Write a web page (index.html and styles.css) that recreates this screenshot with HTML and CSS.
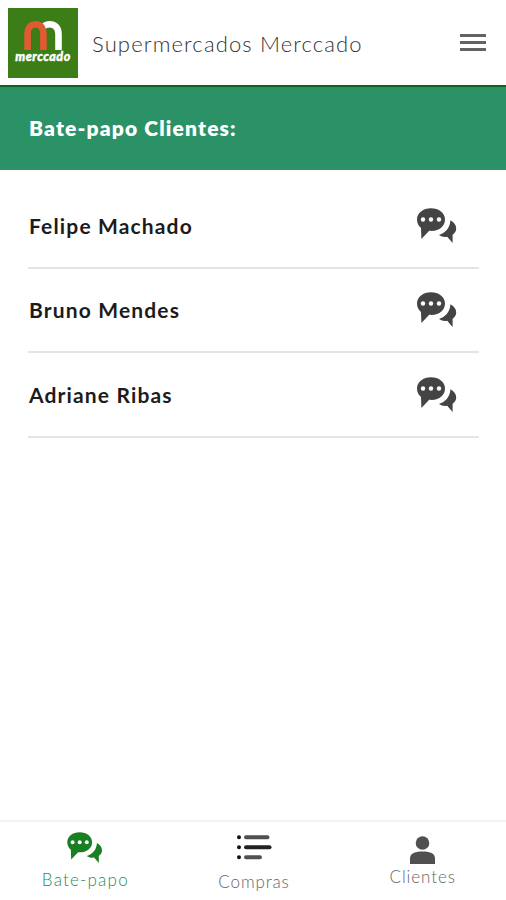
FILE: index.html
```html
<!DOCTYPE html>
<html lang="pt-BR">
<head>
    <meta charset="UTF-8">
    <meta name="viewport" content="width=device-width, initial-scale=1.0">
    <title>Supermercados Merccado</title>
    <link rel="stylesheet" href="styles.css">
</head>
<body>
    <svg class="symbols" aria-hidden="true">
        <symbol id="chat" viewBox="0 0 40 35">
            <path d="M14 .3C6.200.3 0 5 0 11.500c0 3.500 1.500 6.500 4 8.500l.4 11 7.800-8.200c9.800 1 15.800-4.600 15.800-11.300C28 5 21.800.3 14 .3z"/>
            <path d="M33.500 12.300c3.800 2 5.700 5 5.700 8.200 0 2.700-1.400 4.800-3.600 6.300v8.200l-5.400-6.200c-3.200.5-6-.1-8.200-1.800 6.200-2.200 10.700-6.200 11.500-14.700z"/>
            <g class="dots">
                <circle cx="6" cy="11.500" r="2.200"/>
                <circle cx="14" cy="11.500" r="2.200"/>
                <circle cx="22" cy="11.500" r="2.200"/>
            </g>
        </symbol>
    </svg>

    <header class="topbar">
        <div class="logo">
            <svg class="logo-mark" viewBox="0 0 38 29" fill="none" stroke-width="6.600">
                <path stroke="#fff" d="M18 8C20 4 22 3.300 25.500 3.300c6 0 9 4 9 9.800v16"/>
                <path stroke="#e05a32" d="M3.600 29V13c0-6.300 3.200-9.700 7.900-9.700 5.500 0 7.900 4 7.900 9.700v16"/>
            </svg>
            <span class="logo-name">merccado</span>
        </div>
        <h1>Supermercados Merccado</h1>
        <button class="menu" aria-label="Menu">
            <span></span>
            <span></span>
            <span></span>
        </button>
    </header>

    <h2 class="section-title">Bate-papo Clientes:</h2>

    <ul class="clients">
        <li><span>Felipe Machado</span><svg class="chat-icon"><use href="#chat"/></svg></li>
        <li><span>Bruno Mendes</span><svg class="chat-icon"><use href="#chat"/></svg></li>
        <li><span>Adriane Ribas</span><svg class="chat-icon"><use href="#chat"/></svg></li>
    </ul>

    <nav class="tabs">
        <a class="tab active">
            <svg class="tab-chat"><use href="#chat"/></svg>
            <span>Bate-papo</span>
        </a>
        <a class="tab tab-orders">
            <svg class="tab-list" viewBox="0 0 35 26" stroke-linecap="round" stroke-width="4">
                <path stroke="#111" d="M2 2.300h.01M2 12.300h.01M2 22.300h.01"/>
                <path stroke="#505050" d="M9 2.300h21.500M9 22.300h14"/>
                <path stroke="#222" d="M9 12.300h23.500"/>
            </svg>
            <span>Compras</span>
        </a>
        <a class="tab tab-clients">
            <svg class="tab-user" viewBox="0 0 25 28">
                <circle cx="12.500" cy="7" r="6.800"/>
                <path d="M0 28v-5.500c0-4.500 4-7 12.500-7S25 18 25 22.500V28z"/>
            </svg>
            <span>Clientes</span>
        </a>
    </nav>
</body>
</html>
```
FILE: styles.css
```css
* {
    box-sizing: border-box;
}

body {
    display: flex;
    flex-direction: column;
    height: 100vh;
    margin: 0;
    font-family: Lato, sans-serif;
    background-color: #fff;
    color: #1c1c1c;
}

.symbols {
    display: block;
    width: 0;
    height: 0;
}

.topbar {
    display: flex;
    align-items: center;
    height: 85px;
    padding: 0 20px 0 8px;
}

.logo {
    display: flex;
    flex-direction: column;
    align-items: center;
    width: 70px;
    height: 70px;
    padding-top: 13px;
    background-color: #3c7d18;
}

.logo-mark {
    width: 38px;
    height: 29px;
}

.logo-name {
    margin-top: 1px;
    color: #fff;
    font-size: 12.5px;
    font-weight: 900;
    font-style: italic;
    line-height: 12px;
    letter-spacing: 0.5px;
    -webkit-text-stroke: 0.4px #fff;
}

h1 {
    flex: 1;
    margin: 1px 0 0 14px;
    color: #333;
    font-size: 22px;
    font-weight: 300;
    letter-spacing: 1.13px;
    white-space: nowrap;
}

.menu {
    display: flex;
    flex-direction: column;
    gap: 4px;
    padding: 0;
    border: none;
    background: none;
}

.menu span {
    width: 26px;
    height: 3px;
    background-color: #636363;
}

.section-title {
    height: 85px;
    margin: 0;
    padding-left: 29px;
    border-top: 2px solid #10631f;
    background-color: #2b9167;
    color: #fff;
    font-size: 21px;
    font-weight: 800;
    line-height: 81px;
    letter-spacing: 1.15px;
}

.clients {
    flex: 1;
    margin: 0;
    padding: 14px 27px 0 28px;
    list-style: none;
}

.clients li {
    display: flex;
    align-items: center;
    justify-content: space-between;
    height: 84.500px;
    padding: 0 22px 0 1px;
    border-bottom: 2px solid #e4e4e4;
    font-size: 21px;
    font-weight: 700;
    letter-spacing: 1.15px;
}

.chat-icon {
    width: 40px;
    height: 35px;
    fill: #444;
}

.dots {
    fill: #fff;
}

.tabs {
    display: flex;
    height: 80px;
    border-top: 2px solid #f3f3f3;
}

.tab {
    display: flex;
    flex: 1;
    flex-direction: column;
    align-items: center;
    padding-top: 10px;
    padding-left: 2px;
    color: #666;
    font-size: 17px;
    font-weight: 300;
    line-height: 20px;
    letter-spacing: 0.9px;
}

.active {
    color: #268a5e;
    letter-spacing: 1.2px;
}

.tab-chat {
    width: 36px;
    height: 31px;
    margin-bottom: 7px;
    fill: #187f22;
}

.tab-orders {
    padding-top: 13px;
}

.tab-list {
    width: 35px;
    height: 26px;
    margin-bottom: 11px;
}

.tab-clients {
    padding-top: 14px;
}

.tab-user {
    width: 25px;
    height: 28px;
    margin-bottom: 3px;
    fill: #505050;
}
```
